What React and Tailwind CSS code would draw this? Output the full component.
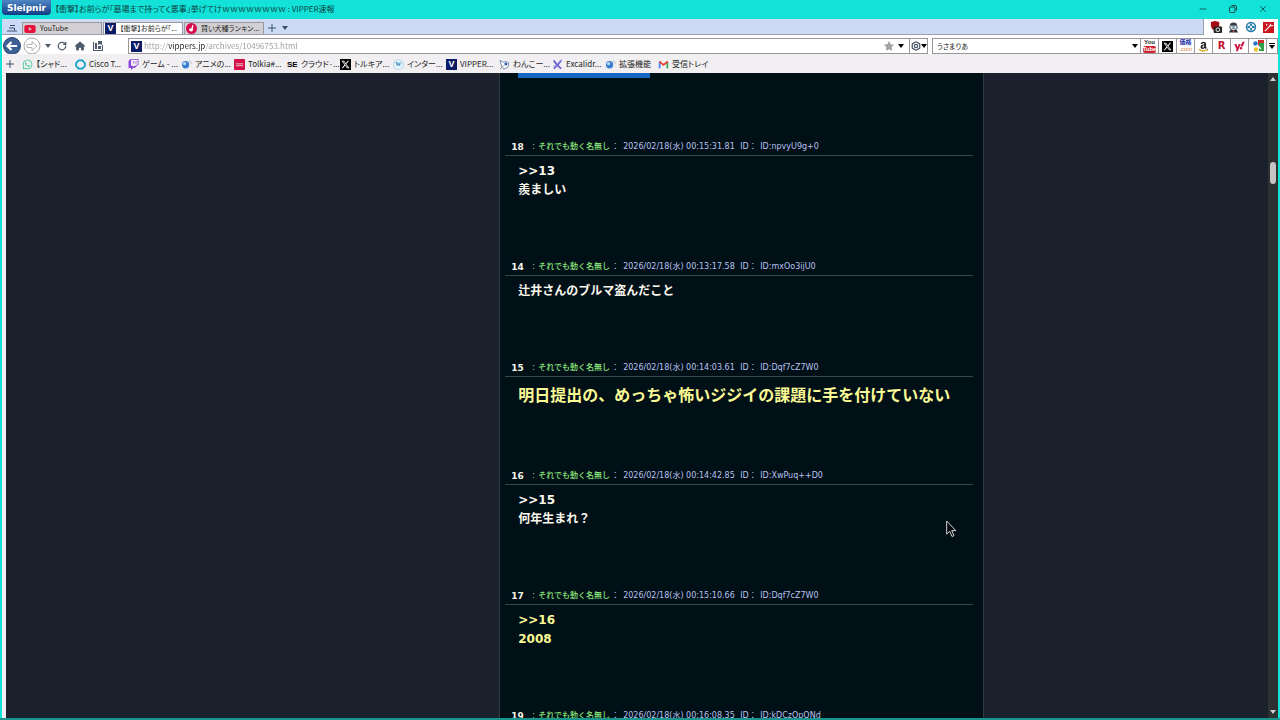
import { FaYoutube, FaXTwitter, FaWhatsapp, FaTwitch, FaAmazon, FaHouse, FaStar, FaYahoo } from 'react-icons/fa6';
import { Minus, X, Plus, RotateCw, Bolt } from 'lucide-react';

const posts = [
  { no: '18', time: '00:15:31.81', id: 'npvyU9g+0', lines: ['>>13', '羨ましい'] },
  { no: '14', time: '00:13:17.58', id: 'mxOo3ijU0', lines: ['辻井さんのブルマ盗んだこと'] },
  { no: '15', time: '00:14:03.61', id: 'Dqf7cZ7W0', lines: ['明日提出の、めっちゃ怖いジジイの課題に手を付けていない'], yellow: true, large: true },
  { no: '16', time: '00:14:42.85', id: 'XwPuq++D0', lines: ['>>15', '何年生まれ？'] },
  { no: '17', time: '00:15:10.66', id: 'Dqf7cZ7W0', lines: ['>>16', '2008'], yellow: true },
  { no: '19', time: '00:16:08.35', id: 'kDCzOpQNd', lines: [] },
];

const VIcon = () => (
  <span className="block size-[11px] shrink-0 bg-[#0b1b66] text-center font-['Liberation_Sans'] text-[9px] leading-[11px] font-bold text-white">V</span>
);

const YouTubeIcon = () => <FaYoutube className="size-3 shrink-0 text-[#e8113c]" />;

const XIcon = () => (
  <span className="flex size-[11px] shrink-0 items-center justify-center bg-black text-white">
    <FaXTwitter className="size-[9px]" />
  </span>
);

const DogIcon = () => (
  <svg viewBox="0 0 12 12" className="size-[11px] shrink-0">
    <circle cx="6" cy="6" r="6" fill="#d80b4c" />
    <path d="M4 8.6c-1.6-1.6.3-3.4 1.9-2.8L7 2l1.2.6-.7 3.3c.7 1.7-.3 3.2-1.7 3.4z" fill="#fff" />
  </svg>
);

const GlobeIcon = () => (
  <svg viewBox="0 0 12 12" className="size-[11px] shrink-0">
    <circle cx="5" cy="6.3" r="4" fill="#3f7fd0" />
    <circle cx="3.8" cy="5" r="1.8" fill="#b9dcfa" />
    <path d="M8.2 1.6q3 .6 2.8 4" fill="none" stroke="#c9c9d3" strokeWidth="1.3" />
  </svg>
);

const RingIcon = () => (
  <svg viewBox="0 0 12 12" className="size-[11px] shrink-0">
    <path d="M4 1.5h4L10.8 4.5v3L8 10.5H4L1.2 7.5v-3z" fill="none" stroke="#0fa0c8" strokeWidth="1.9" strokeLinejoin="round" />
  </svg>
);

const TolkiaIcon = () => (
  <svg viewBox="0 0 12 12" className="size-[11px] shrink-0">
    <rect width="12" height="12" rx="1" fill="#d3104a" />
    <path d="M2 5.3h8M2 7.3h8" stroke="#f6c7d5" strokeWidth="1" />
  </svg>
);

const SeIcon = () => (
  <span className="w-[11px] shrink-0 font-['Liberation_Sans'] text-[8px] leading-[11px] font-bold text-black">SE</span>
);

const WIcon = () => (
  <span className="flex size-[11px] shrink-0 items-center justify-center rounded-full border border-[#b6d6ea] bg-[#e6f4fb] font-['Liberation_Serif'] text-[8px] leading-none font-bold text-[#2583b8]">w</span>
);

const WankoIcon = () => (
  <svg viewBox="0 0 12 12" className="size-[11px] shrink-0">
    <path d="M1 1.5l4 2q3-1.5 5.5.5.5 3-1.5 5.5L5 11q-.5-2-2-3z" fill="#fff" stroke="#5b77a8" strokeWidth=".9" />
    <path d="M1 11l4-4" stroke="#888" />
    <circle cx="7.5" cy="5.5" r="1.7" fill="#335fae" />
  </svg>
);

const ExcalidrawIcon = () => (
  <svg viewBox="0 0 12 12" className="size-[11px] shrink-0">
    <path d="M2 1.5q2 4 8 9M10 1.5Q6.5 7 2 10.5" fill="none" stroke="#6b60d0" strokeWidth="2" />
    <path d="M6 5l4-4 .8 1.5M5 7l-3.5 1" fill="none" stroke="#9c95ea" strokeWidth="1.1" />
  </svg>
);

const GmailIcon = () => (
  <svg viewBox="0 0 12 12" className="size-[11px] shrink-0">
    <path d="M1.8 10.2V3" stroke="#4285f4" strokeWidth="1.9" />
    <path d="M10.2 10.2V3" stroke="#34a853" strokeWidth="1.9" />
    <path d="M1.4 2.8L6 6.4l4.6-3.6" fill="none" stroke="#ea4335" strokeWidth="2" />
  </svg>
);

const Caret = () => (
  <svg viewBox="0 0 6 4" className="h-1 w-1.5 shrink-0">
    <path d="M0 0h6L3 4z" fill="currentColor" />
  </svg>
);

const tabs = [
  { title: 'YouTube', icon: <YouTubeIcon /> },
  { title: '【衝撃】お前らが「...', icon: <VIcon />, active: true },
  { title: '賢い犬種ランキン...', icon: <DogIcon /> },
];

const bookmarks = [
  { title: '【シャド...', icon: <FaWhatsapp className="size-[11px] shrink-0 text-[#43c997]" /> },
  { title: 'Cisco T...', icon: <RingIcon /> },
  { title: 'ゲーム - ...', icon: <FaTwitch className="size-[11px] shrink-0 text-[#8a45dc]" /> },
  { title: 'アニメの...', icon: <GlobeIcon /> },
  { title: 'Tolkia#...', icon: <TolkiaIcon /> },
  { title: 'クラウド·...', icon: <SeIcon /> },
  { title: 'トルキア...', icon: <XIcon /> },
  { title: 'インター...', icon: <WIcon /> },
  { title: 'VIPPER...', icon: <VIcon /> },
  { title: 'わんこー...', icon: <WankoIcon /> },
  { title: 'Excalidr...', icon: <ExcalidrawIcon /> },
  { title: '拡張機能', icon: <GlobeIcon /> },
  { title: '受信トレイ', icon: <GmailIcon /> },
];

const engines = [
  {
    name: 'YouTube',
    icon: (
      <span className="flex flex-col items-center font-['Liberation_Sans'] text-[6px] leading-[7px] font-bold text-[#222]">
        <span>You</span>
        <span className="rounded-xs bg-[#cf2431] text-white">Tube</span>
      </span>
    ),
  },
  { name: 'X', icon: <XIcon /> },
  {
    name: '価格.com',
    icon: (
      <span className="flex flex-col items-center font-['Liberation_Sans','Noto_Sans_CJK_JP',sans-serif] text-[6px] leading-[7px] font-bold text-[#1b2fae]">
        <span>価格</span>
        <span className="font-normal text-[#d8803a]">.com</span>
      </span>
    ),
  },
  {
    name: 'Amazon',
    icon: (
      <svg viewBox="0 0 512 512" className="size-[11px]">
        <FaAmazon size={512} color="#222" />
        <path d="M40 390q200 130 400 20" fill="none" stroke="#e8b92e" strokeWidth="56" />
      </svg>
    ),
  },
  { name: '楽天', icon: <span className="font-['DejaVu_Sans'] text-[10px] leading-none font-bold text-[#c4122f]">R</span> },
  { name: 'Yahoo!', icon: <FaYahoo className="size-[11px] text-[#cc1340]" /> },
  {
    name: 'Google',
    icon: (
      <svg viewBox="0 0 12 12" className="size-3">
        <path d="M6 0h6v6H6z" fill="#cf2e2b" />
        <path d="M7 3h5v8H7z" fill="#2d9d47" />
        <circle cx="3.5" cy="3.5" r="2.3" fill="#2c74c9" />
        <circle cx="4" cy="9.5" r="2.2" fill="#f0c32f" />
        <path d="M5 5l4 4" stroke="#fff" strokeWidth="1.5" />
      </svg>
    ),
  },
];

const TitleBar = () => (
  <header className="flex h-[19px] shrink-0 items-start bg-[#12e2d8]">
    <button className="ml-0.5 h-[15px] w-[49px] rounded-b-sm bg-gradient-to-b from-[#4f86c4] to-[#123c84] font-['DejaVu_Sans'] text-[9px] leading-[14px] font-bold text-white">
      Sleipnir
    </button>
    <h1 className="ml-1 text-[8px] leading-[18px] whitespace-nowrap text-[#0c3f42]">
      【衝撃】お前らが「墓場まで持ってく悪事」挙げてけｗｗｗｗｗｗｗｗ : VIPPER速報
    </h1>
    <div className="ml-auto flex h-[18px] items-center gap-5 pr-3 text-[#14484a]">
      <button aria-label="最小化"><Minus className="size-2.5" /></button>
      <button aria-label="元に戻す">
        <svg viewBox="0 0 10 10" className="size-2.5" fill="none" stroke="currentColor">
          <rect x="1.5" y="3" width="5.5" height="5.5" rx="1" />
          <path d="M3.5 1.5h3.5a1.5 1.5 0 0 1 1.5 1.5v3.5" />
        </svg>
      </button>
      <button aria-label="閉じる"><X className="size-2.5" /></button>
    </div>
  </header>
);

const TabBar = () => (
  <div className="flex h-4 shrink-0 items-end border-b border-[#9a9eae] bg-[#cddaf6] text-[#222]">
    <button aria-label="タブ一覧" className="flex h-3 w-5 items-center justify-center text-[#35506b]">
      <svg viewBox="0 0 10 8" className="h-2 w-2.5" fill="none" stroke="currentColor">
        <path d="M3 1.5h5M2 4h5.5v2.5M0 7h10" />
      </svg>
    </button>
    <nav className="flex gap-px">
      {tabs.map((tab) => (
        <button
          key={tab.title}
          className={`flex h-3 w-20 items-center gap-1 border border-b-0 border-[#9a9a9e] pl-px text-[7px] leading-[11px] whitespace-nowrap ${tab.active ? 'bg-white' : 'bg-[#d2d0d2]'}`}
        >
          {tab.icon}
          {tab.title}
        </button>
      ))}
    </nav>
    <button aria-label="新しいタブ" className="ml-0.5 text-[#35506b]"><Plus className="size-3" /></button>
    <button aria-label="タブメニュー" className="mb-1 ml-1 text-[#35506b]"><Caret /></button>
    <div className="-mb-px ml-auto flex h-4 items-center gap-1.5 border-l border-[#9a9eae] bg-white pr-1 pl-1.5">
      <button aria-label="ブロッカー">
        <svg viewBox="0 0 13 13" className="size-3">
          <path d="M1 1l4.500-1L10 1v5q-1 4-4.500 5Q1.500 9 1 6z" fill="#a40d16" />
          <rect x="4" y="6" width="9" height="7" rx="1" fill="#222" />
          <circle cx="8.5" cy="9.5" r="2" fill="none" stroke="#fff" />
        </svg>
      </button>
      <button aria-label="スクリプト">
        <svg viewBox="0 0 12 12" className="size-[11px]">
          <path d="M2 4q0-3.500 4-3.500T10 4z" fill="#35414c" />
          <path d="M1 4.500h10L10 8H2z" fill="#6c8895" />
          <circle cx="4" cy="6" r="1" fill="#fff" />
          <circle cx="8" cy="6" r="1" fill="#fff" />
          <path d="M3 8l3 1 3-1 2 3.500H1z" fill="#29323b" />
          <path d="M4.500 9.500h3L6 11.500z" fill="#d5484d" />
        </svg>
      </button>
      <button aria-label="ターゲット">
        <svg viewBox="0 0 12 12" className="size-3">
          <circle cx="6" cy="6" r="4.5" fill="#dceff9" stroke="#2b7ea8" strokeWidth="1.5" />
          <path d="M6 2.500v2.500M6 7v2.500M2.500 6H5M7 6h2.500" stroke="#2b7ea8" strokeWidth="1.8" />
        </svg>
      </button>
      <button aria-label="ワンド">
        <svg viewBox="0 0 12 12" className="size-[11px]">
          <rect width="12" height="12" fill="#c9151b" />
          <path d="M2 10l6-6M8 2v3M7 4h4M4 2v2" stroke="#fff" strokeWidth="1.2" />
        </svg>
      </button>
    </div>
  </div>
);

const AddressBar = () => (
  <div className="flex h-[19px] shrink-0 items-center bg-white pt-[3px]">
    <div className="flex w-[126px] shrink-0 items-center pl-px text-[#4b5b6b]">
      <button aria-label="戻る" className="-my-1">
        <svg viewBox="0 0 18 18" className="size-[18px]">
          <circle cx="9" cy="9" r="8.5" fill="#3c5f94" stroke="#2b4773" />
          <path d="M14 9H5M8.500 5L4.500 9l4 4" fill="none" stroke="#fff" strokeWidth="2.2" />
        </svg>
      </button>
      <button aria-label="進む" className="-my-1 ml-0.5">
        <svg viewBox="0 0 18 18" className="size-[18px]">
          <circle cx="9" cy="9" r="8" fill="#fff" stroke="#aaa" />
          <path d="M4 7.500h5V4.500L14 9l-5 4.500v-3H4z" fill="#fff" stroke="#b4b4b4" />
        </svg>
      </button>
      <button aria-label="履歴" className="ml-1"><Caret /></button>
      <button aria-label="更新" className="ml-1.5"><RotateCw className="size-2.5" strokeWidth={3} /></button>
      <button aria-label="ホーム" className="ml-2"><FaHouse className="size-2.5" /></button>
      <button aria-label="ブックマーク" className="ml-2">
        <svg viewBox="0 0 10 10" className="size-2.5">
          <path d="M.5 1v8.500h9V4" fill="none" stroke="currentColor" strokeWidth="1.2" />
          <path d="M2 2h2v6H2zM5 0h4v4L7 3 5 4zM5 5h3v3H5z" fill="currentColor" />
        </svg>
      </button>
    </div>
    <div className="flex h-4 grow items-center border border-[#9a9599] pr-px pl-0.5">
      <VIcon />
      <input
        aria-label="アドレス"
        defaultValue="http://vippers.jp/archives/10496753.html"
        className="ml-0.5 min-w-0 grow bg-[linear-gradient(90deg,#9b9b9b_24px,#222_24px,#222_61px,#9b9b9b_61px)] bg-clip-text font-['Noto_Sans_CJK_JP',sans-serif] text-[8px] leading-[14px] text-transparent outline-none"
      />
      <button aria-label="お気に入り"><FaStar className="size-2.5 text-[#a3a3a8]" /></button>
      <button aria-label="アドレス履歴" className="mx-1"><Caret /></button>
    </div>
    <button aria-label="エンジン" className="flex h-4 w-[18px] items-center justify-center border border-l-0 border-[#9a9599]">
      <Bolt className="size-2.5 text-[#4d5968]" strokeWidth={3} />
      <Caret />
    </button>
    <div className="ml-1 flex h-4 w-[209px] shrink-0 items-center border border-[#9a9599] pr-0.5 pl-1">
      <input aria-label="検索" defaultValue="うさまりあ" className="min-w-0 grow text-[7px] leading-[14px] text-[#222] outline-none" />
      <button aria-label="検索履歴"><Caret /></button>
    </div>
    {engines.map((engine) => (
      <button key={engine.name} aria-label={engine.name} className="flex h-4 w-[18px] shrink-0 items-center justify-center border border-l-0 border-[#9a9599] bg-white">
        {engine.icon}
      </button>
    ))}
    <button aria-label="その他" className="flex h-4 w-[11px] shrink-0 flex-col items-center justify-center gap-px border border-l-0 border-[#9a9599]">
      <span className="h-px w-1.5 bg-black" />
      <Caret />
    </button>
  </div>
);

const BookmarkBar = () => (
  <nav className="flex h-[19px] shrink-0 items-center bg-[#f1eff1] pt-px text-[8px] text-[#222]">
    <button aria-label="追加" className="flex w-5 shrink-0 justify-center pr-1 text-[#35506b]"><Plus className="size-3" /></button>
    {bookmarks.map((item) => (
      <a key={item.title} href="#" className="flex w-[53px] shrink-0 items-center gap-[3px] whitespace-nowrap">
        {item.icon}
        {item.title}
      </a>
    ))}
  </nav>
);

const Post = ({ post }) => (
  <article className="pb-[58px]">
    <header className="flex border-b border-[#3b484a] pt-px pl-[6px] text-[8px] leading-4 whitespace-nowrap text-[#b9c3f0]">
      <span className="w-[21px] text-[9px] font-bold text-[#f4f4e6]">{post.no}</span>
      <span className="w-[6px] text-[#9fe08c]">:</span>
      <span className="w-[72px] font-medium text-[#8ee67c]">それでも動く名無し</span>
      <span className="ml-px w-[12px]">：</span>
      <span className="w-[117px]">2026/02/18(水) {post.time}</span>
      <span className="w-5">ID：</span>
      <span>ID:{post.id}</span>
    </header>
    <div className={`pt-[6px] pl-[13px] font-bold ${post.large ? 'text-base leading-[26px]' : 'text-xs leading-[19px]'} ${post.yellow ? 'text-[#fbfb95]' : 'text-[#fbf8ee]'}`}>
      {post.lines.map((line) => (
        <p key={line}>{line}</p>
      ))}
    </div>
  </article>
);

const Scrollbar = () => (
  <div className="flex w-[10px] shrink-0 flex-col items-center bg-[#2e3131] py-1 text-[#d0d0d0]">
    <svg viewBox="0 0 6 4" className="h-1 w-1.5"><path d="M0 4h6L3 0z" fill="currentColor" /></svg>
    <span className="mt-[81px] h-[22px] w-1.5 rounded-full bg-[#c4c4c4]" />
    <span className="mt-auto"><Caret /></span>
  </div>
);

export default function App() {
  return (
    <div className="flex h-screen flex-col overflow-hidden bg-[#12e2d8] font-['Noto_Sans_CJK_JP',sans-serif] [font-feature-settings:'palt']">
      <TitleBar />
      <div className="mr-0.5 ml-0.5 flex min-h-0 grow flex-col bg-[#f1eff1]">
        <TabBar />
        <AddressBar />
        <BookmarkBar />
        <div className="ml-1 flex min-h-0 grow bg-[#1b212c] font-['DejaVu_Sans','Noto_Sans_CJK_JP',sans-serif] [font-feature-settings:normal]">
          <div className="grow-7" />
          <main className="mr-0.5 w-[485px] shrink-0 overflow-hidden border-x border-[#2f3947] bg-[#010f17] pr-[10px] pl-[5px]">
            <div className="mb-[60px] ml-[13px] h-[5px] w-[132px] bg-[#1567c2]" />
            {posts.map((post) => (
              <Post key={post.no} post={post} />
            ))}
          </main>
          <div className="grow-4" />
          <Scrollbar />
        </div>
      </div>
      <footer className="h-0.5 shrink-0 bg-[#16968f]" />

      {/* mouse pointer */}
      <svg viewBox="0 0 12 18" className="pointer-events-none absolute top-[520px] left-[946px] h-[18px] w-3">
        <path d="M.7 1v13l3-2.7 2.300 5.200 2-.9-2.300-5h4.100z" fill="#05080c" stroke="#d8d8d8" strokeWidth="1" />
      </svg>
    </div>
  );
}
